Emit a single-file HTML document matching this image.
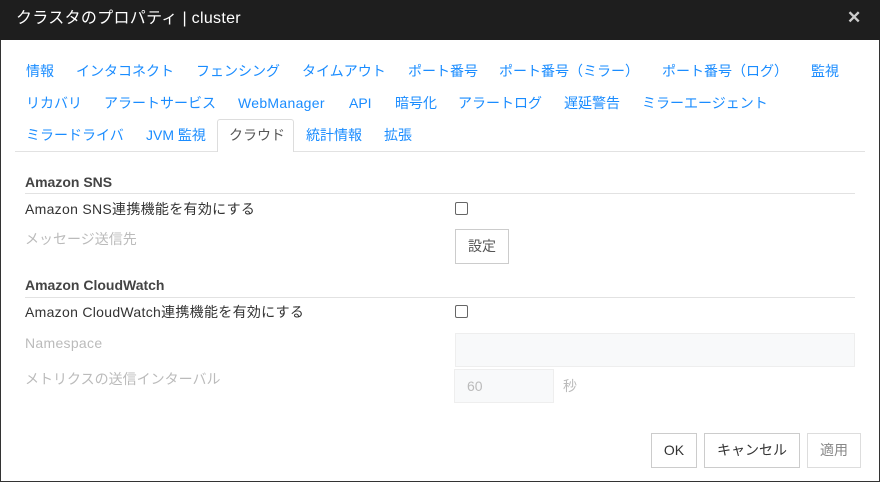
<!DOCTYPE html>
<html><head><meta charset="utf-8"><style>
body{margin:0;width:880px;height:482px;overflow:hidden;background:#fff;font-family:"Liberation Sans","Noto Sans CJK JP",sans-serif;font-size:14px;color:#333}
.f{position:absolute;left:0;top:0;width:878px;height:480px;border:1px solid #333}
.t{position:absolute;left:0;top:0;width:880px;height:40px;background:#1e1e1e}
.a{position:absolute;white-space:nowrap;line-height:18px}
.tab{color:#1a8cff}
.g{color:#bbb}
.b{font-weight:bold;color:#444}
.ls{letter-spacing:0.3px}
.ln{position:absolute;height:1px;background:#e2e2e2}
.cb{position:absolute;width:11px;height:11px;border:1px solid #666;border-radius:2px;background:#fff}
.btn{position:absolute;border:1px solid #ccc;background:#fff;text-align:center;box-sizing:border-box;font-size:14px}
.in{position:absolute;border:1px solid #eee;background:#f8f9fa;box-sizing:border-box}
</style></head><body>
<div class="f"></div>
<div class="t"></div>
<div class="a" style="left:16px;top:10px;color:#fff;font-size:16px;letter-spacing:0.3px">クラスタのプロパティ | cluster</div>
<div class="a" style="left:847px;top:9px;color:#ccc;font-size:17px;font-weight:bold">✕</div>

<div class="a tab" style="left:26px;top:62px">情報</div>
<div class="a tab" style="left:76px;top:62px">インタコネクト</div>
<div class="a tab" style="left:196px;top:62px">フェンシング</div>
<div class="a tab" style="left:302px;top:62px">タイムアウト</div>
<div class="a tab" style="left:408px;top:62px">ポート番号</div>
<div class="a tab" style="left:499px;top:62px">ポート番号（ミラー）</div>
<div class="a tab" style="left:662px;top:62px">ポート番号（ログ）</div>
<div class="a tab" style="left:811px;top:62px">監視</div>

<div class="a tab" style="left:26px;top:94px">リカバリ</div>
<div class="a tab" style="left:104px;top:94px">アラートサービス</div>
<div class="a tab ls" style="left:238px;top:94px">WebManager</div>
<div class="a tab" style="left:349px;top:94px">API</div>
<div class="a tab" style="left:395px;top:94px">暗号化</div>
<div class="a tab" style="left:458px;top:94px">アラートログ</div>
<div class="a tab" style="left:564px;top:94px">遅延警告</div>
<div class="a tab" style="left:642px;top:94px">ミラーエージェント</div>

<div class="ln" style="left:15px;top:151px;width:850px"></div>
<div style="position:absolute;left:217px;top:119px;width:77px;height:33px;border:1px solid #ddd;border-bottom:none;border-radius:3px 3px 0 0;background:#fff;box-sizing:border-box"></div>
<div class="a tab" style="left:26px;top:126px">ミラードライバ</div>
<div class="a tab" style="left:146px;top:126px">JVM 監視</div>
<div class="a" style="left:229px;top:126px;color:#555">クラウド</div>
<div class="a tab" style="left:306px;top:126px">統計情報</div>
<div class="a tab" style="left:384px;top:126px">拡張</div>

<div class="a b" style="left:25px;top:173px">Amazon SNS</div>
<div class="ln" style="left:25px;top:193px;width:830px"></div>
<div class="a ls" style="left:25px;top:200px">Amazon SNS連携機能を有効にする</div>
<div class="cb" style="left:455px;top:202px"></div>
<div class="a g" style="left:25px;top:230px">メッセージ送信先</div>
<div class="btn" style="left:455px;top:229px;width:54px;height:35px;line-height:33px;color:#555">設定</div>

<div class="a b" style="left:25px;top:276px">Amazon CloudWatch</div>
<div class="ln" style="left:25px;top:297px;width:830px"></div>
<div class="a ls" style="left:25px;top:303px">Amazon CloudWatch連携機能を有効にする</div>
<div class="cb" style="left:455px;top:305px"></div>
<div class="a g ls" style="left:25px;top:334px">Namespace</div>
<div class="in" style="left:455px;top:333px;width:400px;height:34px"></div>
<div class="a g" style="left:25px;top:370px">メトリクスの送信インターバル</div>
<div class="in" style="left:454px;top:369px;width:100px;height:34px"></div>
<div class="a g" style="left:467px;top:377px">60</div>
<div class="a g" style="left:563px;top:377px">秒</div>

<div class="btn" style="left:651px;top:433px;width:46px;height:35px;line-height:33px">OK</div>
<div class="btn" style="left:704px;top:433px;width:96px;height:35px;line-height:33px">キャンセル</div>
<div class="btn" style="left:807px;top:433px;width:54px;height:35px;line-height:33px;color:#888;border-color:#ddd">適用</div>
</body></html>
